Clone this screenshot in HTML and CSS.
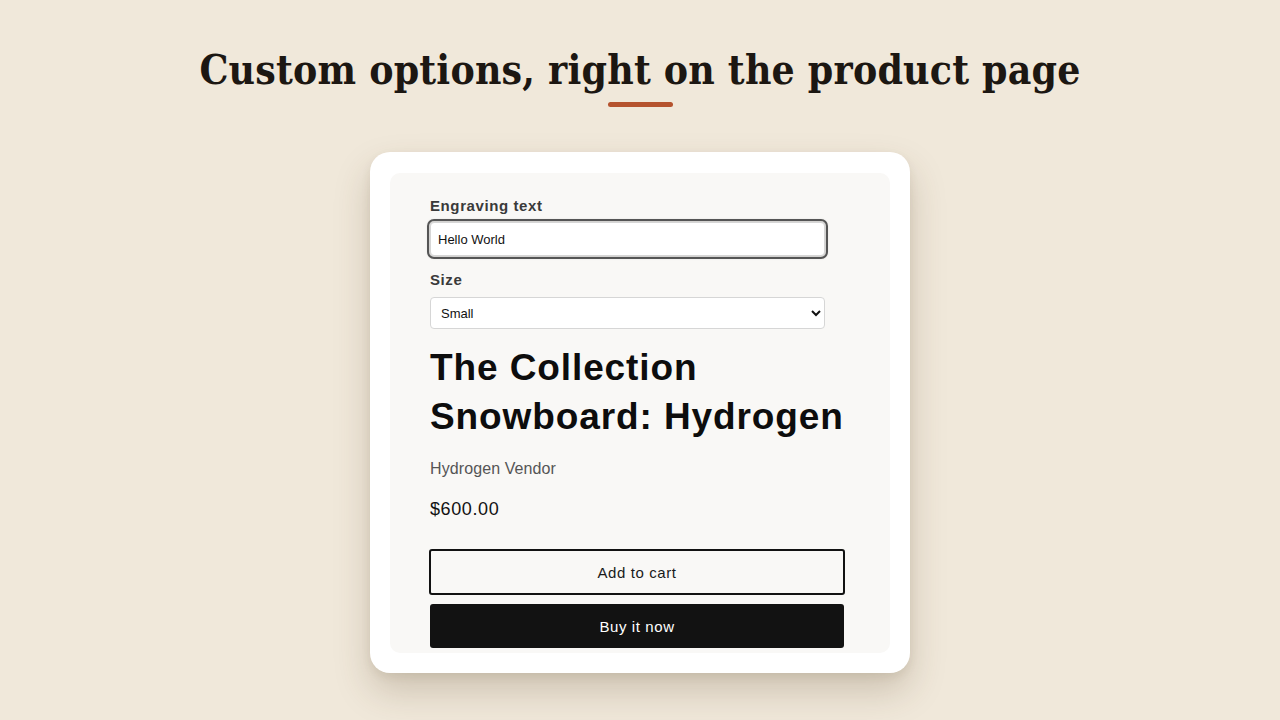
FILE: index.html
```html
<!DOCTYPE html>
<html lang="en">
<head>
<meta charset="utf-8">
<title>Custom options</title>
<link rel="stylesheet" href="styles.css">
</head>
<body>
  <main class="page">
    <header class="hero">
      <h1 class="hero-title">Custom options, right on the product page</h1>
      <span class="hero-rule"></span>
    </header>

    <section class="card">
      <div class="product">
        <label class="field-label" for="engraving">Engraving text</label>
        <input id="engraving" class="field-input" type="text" value="Hello World">

        <label class="field-label field-label-size" for="size">Size</label>
        <select id="size" class="field-select">
          <option>Small</option>
          <option>Medium</option>
          <option>Large</option>
        </select>

        <h2 class="product-title">The Collection Snowboard: Hydrogen</h2>
        <p class="product-vendor">Hydrogen Vendor</p>
        <p class="product-price">$600.00</p>

        <button class="btn btn-outline" type="button">Add to cart</button>
        <button class="btn btn-solid" type="button">Buy it now</button>
      </div>
    </section>
  </main>
</body>
</html>
```

FILE: styles.css
```css
* {
  box-sizing: border-box;
}

html, body {
  margin: 0;
  padding: 0;
}

body {
  background: #f0e8da;
  font-family: "Liberation Sans", Arial, sans-serif;
  color: #121212;
  height: 720px;
  overflow: hidden;
}

.page {
  display: flex;
  flex-direction: column;
  align-items: center;
}

.hero {
  display: flex;
  flex-direction: column;
  align-items: center;
  padding-top: 46px;
}

.hero-title {
  margin: 0;
  font-family: "DejaVu Serif", serif;
  font-stretch: condensed;
  font-weight: 700;
  font-size: 40.5px;
  line-height: 48px;
  color: #1c1712;
  letter-spacing: 0.2px;
}

.hero-rule {
  display: block;
  width: 65px;
  height: 5px;
  border-radius: 3px;
  background: #b5532e;
  margin-top: 8px;
}

.card {
  margin-top: 45px;
  width: 540px;
  height: 521px;
  padding: 21px 20px 20px;
  background: #ffffff;
  border-radius: 20px;
  box-shadow: 0 18px 36px rgba(80, 60, 30, 0.22), 0 4px 10px rgba(80, 60, 30, 0.08);
}

.product {
  height: 100%;
  background: #f9f8f6;
  border-radius: 10px;
  padding: 24px 45px 0 40px;
  display: flex;
  flex-direction: column;
  align-items: flex-start;
  overflow: hidden;
}

.field-label {
  font-size: 15px;
  font-weight: 700;
  letter-spacing: 0.6px;
  color: #3a3a3a;
  line-height: 18px;
  margin-bottom: 7px;
}

.field-label-size {
  margin-top: 15px;
}

.field-input {
  width: 395px;
  height: 34px;
  padding: 0 7px;
  font-family: "Liberation Sans", Arial, sans-serif;
  font-size: 13px;
  color: #111;
  background: #fff;
  border: 1px solid #d6d6d6;
  border-radius: 4px;
  outline: 2px solid #555;
  outline-offset: 1px;
  box-shadow: 0 0 3px 2px rgba(0, 0, 0, 0.18);
}

.field-select {
  width: 395px;
  height: 32px;
  margin-top: 1px;
  padding: 0 6px 0 6px;
  font-family: "Liberation Sans", Arial, sans-serif;
  font-size: 13px;
  color: #111;
  background: #fff;
  border: 1px solid #d6d6d6;
  border-radius: 4px;
}

.product-title {
  margin: 14px 0 0;
  font-size: 37px;
  line-height: 49px;
  font-weight: 700;
  letter-spacing: 0.9px;
  color: #0d0d0d;
}

.product-vendor {
  margin: 18px 0 0;
  font-size: 16px;
  line-height: 20px;
  letter-spacing: 0.1px;
  color: #555;
}

.product-price {
  margin: 20px 0 0;
  font-size: 18px;
  line-height: 20px;
  letter-spacing: 0.6px;
  color: #121212;
}

.btn {
  width: 415px;
  font-family: "Liberation Sans", Arial, sans-serif;
  font-size: 15px;
  letter-spacing: 0.6px;
  border-radius: 3px;
  cursor: pointer;
}

.btn-outline {
  margin-top: 30px;
  height: 46px;
  margin-left: -1px;
  width: 416px;
  background: transparent;
  color: #1a1a1a;
  border: 2px solid #121212;
}

.btn-solid {
  margin-top: 9px;
  height: 44px;
  width: 414px;
  background: #121212;
  color: #fff;
  border: none;
}
```
